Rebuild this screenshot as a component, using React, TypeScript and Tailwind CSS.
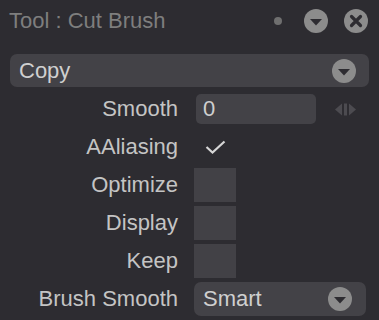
import React from 'react';

const DownCircle: React.FC<{ color?: string }> = ({ color = '#8c8c8c' }) => (
  <svg width="24" height="24" viewBox="0 0 24 24">
    <circle cx="12" cy="12" r="12" fill={color} />
    <path d="M6 10 L18 10 L12 16.5 Z" fill="#2d2c31" />
  </svg>
);

const CloseCircle: React.FC = () => (
  <svg width="24" height="24" viewBox="0 0 24 24">
    <circle cx="12" cy="12" r="12" fill="#8c8c8c" />
    <path d="M7.5 7.5 L16.5 16.5 M16.5 7.5 L7.5 16.5" stroke="#2d2c31" strokeWidth="3.2" strokeLinecap="round" />
  </svg>
);

const Arrows: React.FC = () => (
  <svg width="21" height="13" viewBox="0 0 21 13">
    <path d="M0 6.5 L7 0.5 L7 12.5 Z" fill="#4c4b50" />
    <rect x="9" y="0.5" width="3" height="12" fill="#4c4b50" />
    <path d="M21 6.5 L14 0.5 L14 12.5 Z" fill="#4c4b50" />
  </svg>
);

const Row: React.FC<{ label: string; children: React.ReactNode }> = ({ label, children }) => (
  <div className="flex items-center h-[34px]">
    <span className="w-[178px] text-right text-[#c4c4c4] leading-none whitespace-nowrap">{label}</span>
    <div className="ml-[16px] flex items-center h-full">{children}</div>
  </div>
);

const Box: React.FC<{ checked?: boolean }> = ({ checked }) => (
  <div className={`w-[42px] h-[34px] flex items-center justify-center ${checked ? '' : 'bg-[#424146]'}`}>
    {checked && (
      <svg width="21" height="14" viewBox="0 0 21 14">
        <path d="M1.5 7 L7.5 12.5 L19.5 1.5" fill="none" stroke="#d6d6d6" strokeWidth="2.2" />
      </svg>
    )}
  </div>
);

export default function App() {
  return (
    <div className="w-[379px] h-[320px] bg-[#2d2c31] font-['Liberation_Sans',Arial,sans-serif] text-[22px] overflow-hidden">
      <div className="flex items-center h-[42px] pl-[9px] pr-[11px]">
        <span className="text-[#7e7e7e] leading-none">Tool : Cut Brush</span>
        <div className="ml-auto flex items-center">
          <div className="w-[8px] h-[8px] rounded-full bg-[#6f6f6f]" />
          <div className="ml-[22px]"><DownCircle /></div>
          <div className="ml-[16px]"><CloseCircle /></div>
        </div>
      </div>

      <div className="mx-[10px] mt-[12px] h-[33px] rounded-[7px] bg-[#434247] flex items-center pl-[9px] pr-[13px]">
        <span className="text-[#cfcfcf] leading-none">Copy</span>
        <div className="ml-auto"><DownCircle /></div>
      </div>

      <div className="mt-[5px] flex flex-col gap-[4px]">
        <Row label="Smooth">
          <div className="ml-[2px] w-[120px] h-[30px] rounded-[5px] bg-[#434247] flex items-center pl-[7px] text-[#cfcfcf] leading-none">0</div>
          <div className="ml-[19px]"><Arrows /></div>
        </Row>
        <Row label="AAliasing"><Box checked /></Row>
        <Row label="Optimize"><Box /></Row>
        <Row label="Display"><Box /></Row>
        <Row label="Keep"><Box /></Row>
        <Row label="Brush Smooth">
          <div className="w-[172px] h-[34px] rounded-[7px] bg-[#434247] flex items-center pl-[9px] pr-[14px]">
            <span className="text-[#cfcfcf] leading-none">Smart</span>
            <div className="ml-auto"><DownCircle /></div>
          </div>
        </Row>
      </div>
    </div>
  );
}
